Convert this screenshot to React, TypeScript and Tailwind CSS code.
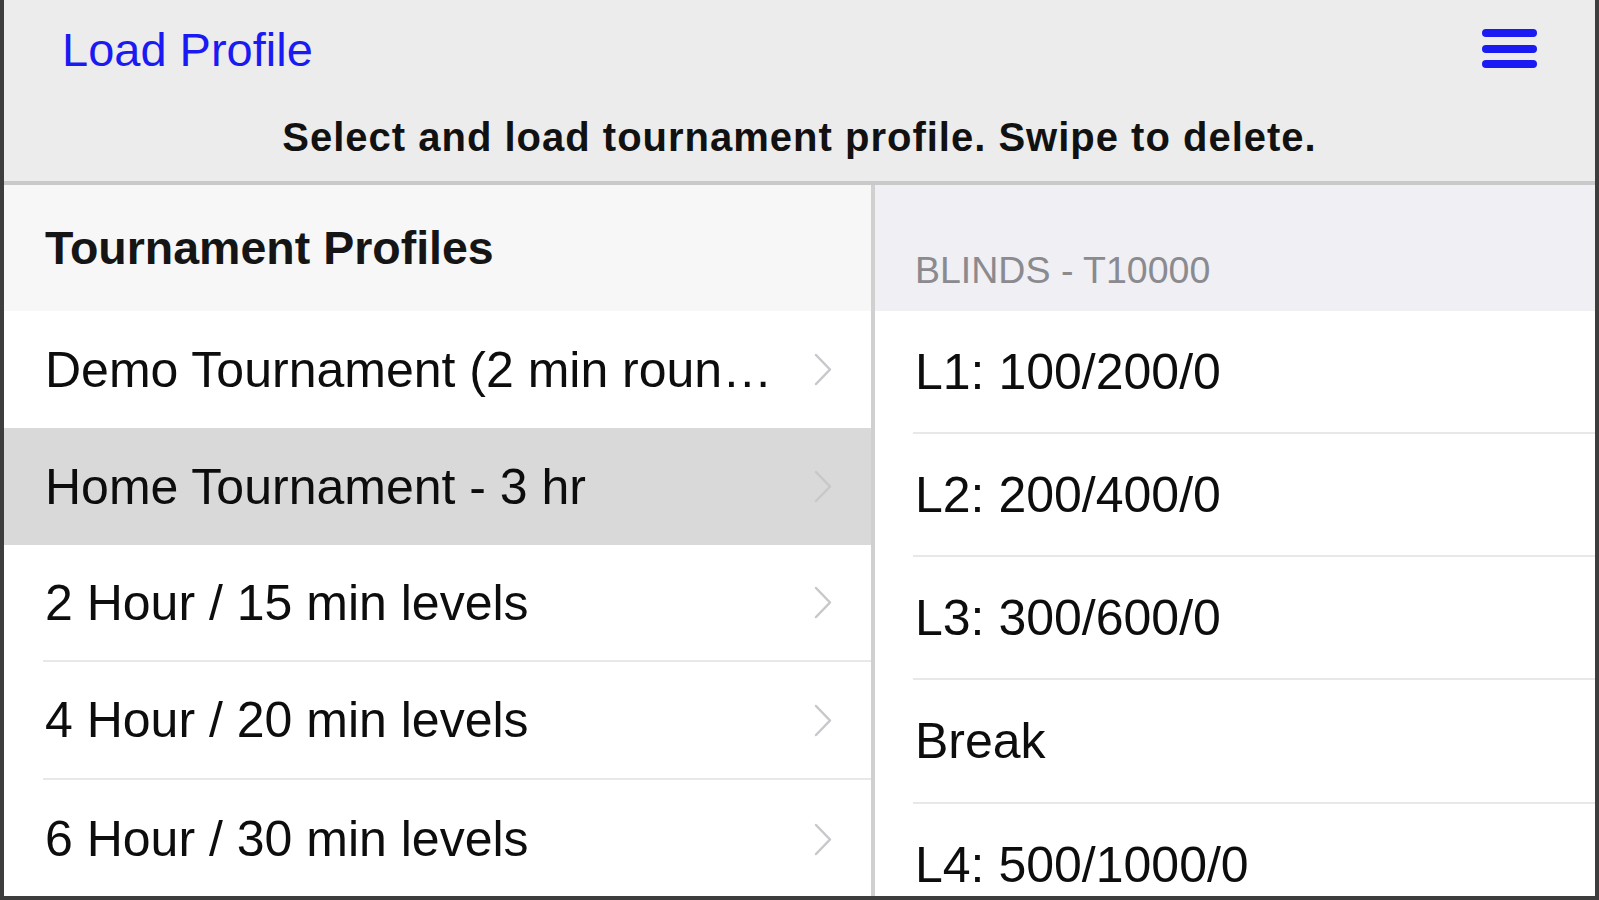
const profiles = [
  { id: "demo", name: "Demo Tournament (2 min rounds)", h: "h-[117px]", line: false },
  { id: "home", name: "Home Tournament - 3 hr", h: "h-[117px]", line: false, selected: true },
  { id: "2h", name: "2 Hour / 15 min levels", h: "h-[117px]", line: true },
  { id: "4h", name: "4 Hour / 20 min levels", h: "h-[118px]", line: true },
  { id: "6h", name: "6 Hour / 30 min levels", h: "h-[118px]", line: false },
];

const blinds = [
  { label: "L1: 100/200/0", h: "h-[123px]" },
  { label: "L2: 200/400/0", h: "h-[123px]" },
  { label: "L3: 300/600/0", h: "h-[123px]" },
  { label: "Break", h: "h-[124px]" },
  { label: "L4: 500/1000/0", h: "h-[124px]" },
];

function Chevron() {
  return (
    <svg width="20" height="35" viewBox="0 0 20 35" className="shrink-0">
      <polyline points="3,3 17,17.5 3,32" fill="none" stroke="#c7c7cc" strokeWidth="2.5" strokeLinecap="round" strokeLinejoin="round" />
    </svg>
  );
}

function Hamburger() {
  return (
    <svg width="55" height="40" viewBox="0 0 55 40">
      <g stroke="#1a1af2" strokeWidth="8" strokeLinecap="round">
        <line x1="4" y1="4" x2="51" y2="4" />
        <line x1="4" y1="20" x2="51" y2="20" />
        <line x1="4" y1="35" x2="51" y2="35" />
      </g>
    </svg>
  );
}

export default function App() {
  return (
    <div className="w-[1599px] h-[900px] flex flex-col overflow-hidden border-x-4 border-b-4 border-[#3d3d3d] font-['Liberation_Sans',Arial,sans-serif] text-[#0d0d0d]">
      {/* Header */}
      <header className="h-[181px] shrink-0 bg-[#ececec]">
        <div className="h-[60px] mt-[19px] pl-[58px] pr-[58px] flex items-center justify-between">
          <span className="text-[47px] leading-[47px] text-[#1a1af2]">Load Profile</span>
          <Hamburger />
        </div>
        <p className="mt-[38px] text-center text-[40px] leading-[40px] font-bold tracking-[1px] text-[#111]">
          Select and load tournament profile. Swipe to delete.
        </p>
      </header>
      <div className="h-[4px] shrink-0 bg-[#c9c9c9]" />

      {/* Body */}
      <div className="flex-1 flex min-h-0">
        {/* Profiles list */}
        <section className="w-[867px] shrink-0 flex flex-col bg-white overflow-hidden">
          <div className="h-[126px] shrink-0 bg-[#f7f7f7] flex items-center pl-[41px]">
            <h2 className="text-[46.5px] leading-[46px] font-bold text-[#151515]">Tournament Profiles</h2>
          </div>
          {profiles.map((p) => (
            <div key={p.id} className={`${p.h} shrink-0 flex pl-[39px] ${p.selected ? "bg-[#d9d9d9]" : "bg-white"}`}>
              <div className={`flex-1 min-w-0 flex items-center pl-[2px] pr-[38px] ${p.line ? "border-b-2 border-[#e8e8e8]" : ""}`}>
                <span className="flex-1 min-w-0 truncate text-[50px] leading-[58px]">{p.name}</span>
                <div className="ml-[28px]">
                  <Chevron />
                </div>
              </div>
            </div>
          ))}
        </section>

        <div className="w-[4px] shrink-0 bg-[#d0d0d0]" />

        {/* Blinds */}
        <section className="flex-1 min-w-0 flex flex-col bg-white overflow-hidden">
          <div className="h-[126px] shrink-0 bg-[#efeff4] flex items-end pl-[40px] pb-[22px]">
            <span className="text-[37.5px] leading-[37px] text-[#8a8a8f]">BLINDS - T10000</span>
          </div>
          {blinds.map((b) => (
            <div key={b.label} className={`${b.h} shrink-0 flex pl-[38px]`}>
              <div className="flex-1 flex items-center pl-[2px] border-b-2 border-[#e8e8e8]">
                <span className="text-[50px] leading-[58px]">{b.label}</span>
              </div>
            </div>
          ))}
        </section>
      </div>
    </div>
  );
}
